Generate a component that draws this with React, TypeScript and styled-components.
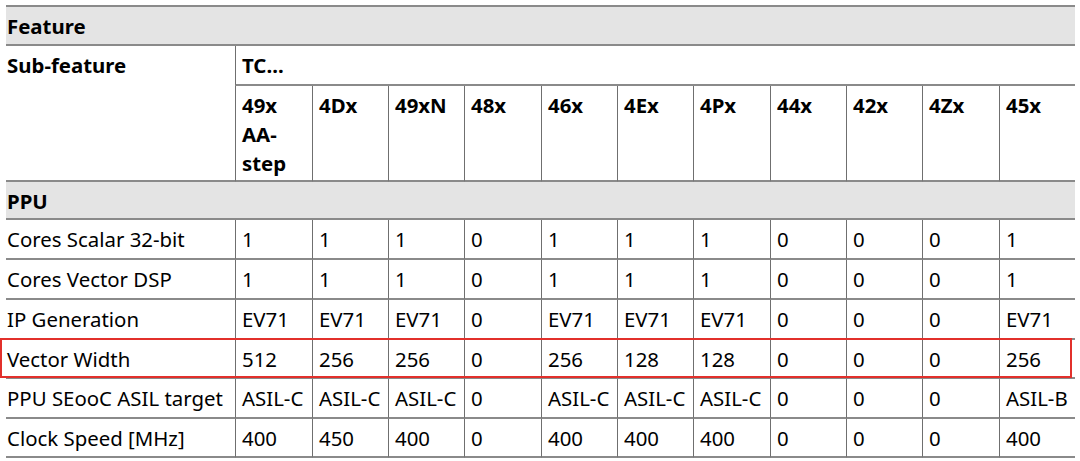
import { FC } from "react";
import styled, { createGlobalStyle } from "styled-components";

const models: string[] = ["49x AA-step", "4Dx", "49xN", "48x", "46x", "4Ex", "4Px", "44x", "42x", "4Zx", "45x"];
const colWidths: number[] = [77, 76, 76, 77, 76, 76, 77, 76, 76, 77, 76];

interface iRow {
  label: string;
  values: string[];
  h: number;
}

const rows: iRow[] = [
  { label: "Cores Scalar 32-bit", values: ["1", "1", "1", "0", "1", "1", "1", "0", "0", "0", "1"], h: 40 },
  { label: "Cores Vector DSP", values: ["1", "1", "1", "0", "1", "1", "1", "0", "0", "0", "1"], h: 40 },
  {
    label: "IP Generation",
    values: ["EV71", "EV71", "EV71", "0", "EV71", "EV71", "EV71", "0", "0", "0", "EV71"],
    h: 40,
  },
  {
    label: "Vector Width",
    values: ["512", "256", "256", "0", "256", "128", "128", "0", "0", "0", "256"],
    h: 39,
  },
  {
    label: "PPU SEooC ASIL target",
    values: ["ASIL-C", "ASIL-C", "ASIL-C", "0", "ASIL-C", "ASIL-C", "ASIL-C", "0", "0", "0", "ASIL-B"],
    h: 40,
  },
  {
    label: "Clock Speed [MHz]",
    values: ["400", "450", "400", "0", "400", "400", "400", "0", "0", "0", "400"],
    h: 39,
  },
];

const App: FC = () => {
  return (
    <Page>
      <GlobalStyle />
      <Table>
        <colgroup>
          <col style={{ width: 229 }} />
          {colWidths.map((w, i) => (
            <col key={i} style={{ width: w }} />
          ))}
        </colgroup>
        <tbody>
          <Row h={39}>
            <Cell colSpan={12} head gray first>
              Feature
            </Cell>
          </Row>
          <Row h={40}>
            <Cell rowSpan={2} head first>
              Sub-feature
            </Cell>
            <Cell colSpan={11} head>
              TC...
            </Cell>
          </Row>
          <Row h={96}>
            {models.map((m) => (
              <Cell key={m} head>
                {m === "49x AA-step" ? (
                  <>
                    49x
                    <br />
                    AA-
                    <br />
                    step
                  </>
                ) : (
                  m
                )}
              </Cell>
            ))}
          </Row>
          <Row h={38}>
            <Cell colSpan={12} head gray first>
              PPU
            </Cell>
          </Row>
          {rows.map((r) => (
            <Row key={r.label} h={r.h}>
              <Cell first>{r.label}</Cell>
              {r.values.map((v, i) => (
                <Cell key={i}>{v}</Cell>
              ))}
            </Row>
          ))}
        </tbody>
      </Table>
      <Highlight />
    </Page>
  );
};

export default App;

const GlobalStyle = createGlobalStyle`
  html, body {
    margin: 0;
    padding: 0;
    background: #ffffff;
  }
`;

const Page = styled.div`
  position: relative;
  width: 1080px;
  height: 461px;
  overflow: hidden;
  padding: 5px 0 0 6px;
  box-sizing: border-box;
  font-family: "Noto Sans", "Open Sans", sans-serif;
  color: #000;
`;

const Table = styled.table`
  width: 1069px;
  table-layout: fixed;
  border-collapse: separate;
  border-spacing: 0;
  border-top: 2px solid #8a8a8a;
`;

const Row = styled.tr<{ h: number }>`
  height: ${(p) => p.h}px;
`;

const Cell = styled.td<{ head?: boolean; gray?: boolean; first?: boolean }>`
  vertical-align: top;
  padding: 5px 0 0 ${(p) => (p.first ? "1px" : "6px")};
  font-size: 20.4px;
  line-height: 29px;
  font-weight: ${(p) => (p.head ? 700 : 400)};
  background: ${(p) => (p.gray ? "#e4e4e4" : "transparent")};
  border-bottom: 2px solid #8a8a8a;
  border-left: ${(p) => (p.first ? "none" : "1px solid #6f6f6f")};
  white-space: nowrap;
  overflow: hidden;
`;

const Highlight = styled.div`
  position: absolute;
  left: 0;
  top: 338px;
  width: 1072px;
  height: 40px;
  box-sizing: border-box;
  border: 2px solid #e2302b;
  pointer-events: none;
`;
